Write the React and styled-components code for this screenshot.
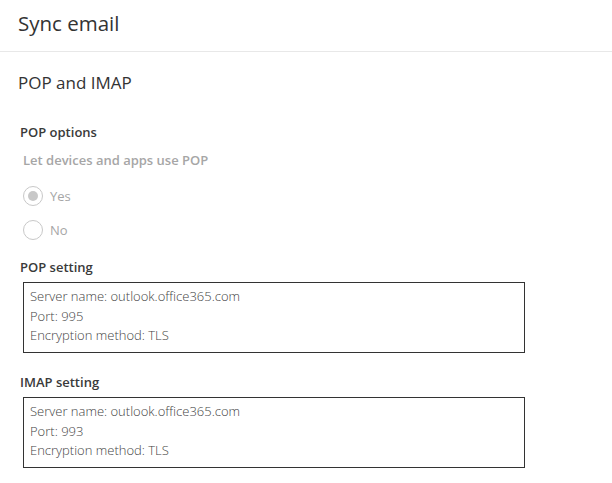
import React from "react";
import styled, { createGlobalStyle } from "styled-components";

const GlobalStyle = createGlobalStyle`
  html, body {
    margin: 0;
    padding: 0;
    background: #ffffff;
    font-family: "Open Sans", "Noto Sans", sans-serif;
    color: #333333;
  }
`;

const Page = styled.div`
  width: 612px;
  height: 483px;
  overflow: hidden;
  background: #fff;
`;

const Header = styled.div`
  height: 52px;
  box-sizing: border-box;
  padding: 10px 18px 0;
  border-bottom: 1px solid #e8e8e8;
`;

const Title = styled.h1`
  margin: 0;
  font-size: 20.5px;
  font-weight: 400;
  line-height: 27px;
  color: #333;
`;

const Body = styled.div`
  padding: 20px 18px 0;
`;

const SectionTitle = styled.h2`
  margin: 0 0 29px;
  font-size: 17px;
  font-weight: 400;
  line-height: 22px;
  color: #333;
`;

const Group = styled.div`
  padding-left: 2px;
`;

const Label = styled.div`
  font-size: 13px;
  font-weight: 600;
  line-height: 18px;
  color: #3a3a3a;
`;

const SubLabel = styled.div`
  font-size: 13px;
  font-weight: 600;
  line-height: 18px;
  color: #a6a6a6;
  padding-left: 3px;
  margin: 10px 0 17px;
`;

const RadioList = styled.div`
  display: flex;
  flex-direction: column;
  gap: 14px;
  padding-left: 3px;
  margin-bottom: 18px;
`;

const RadioRow = styled.label`
  display: flex;
  align-items: center;
  gap: 7px;
  font-size: 13px;
  color: #a6a6a6;
  height: 20px;
`;

const Circle = styled.span`
  width: 18px;
  height: 18px;
  border: 1px solid #c8c8c8;
  border-radius: 50%;
  display: flex;
  align-items: center;
  justify-content: center;
  box-sizing: content-box;
`;

const Dot = styled.span`
  width: 10px;
  height: 10px;
  border-radius: 50%;
  background: #c8c8c8;
`;

const Box = styled.div`
  width: 502px;
  height: 71px;
  box-sizing: border-box;
  margin: 6px 0 0 3px;
  border: 1px solid #333;
  padding: 4px 6px;
  font-size: 13px;
  font-weight: 300;
  line-height: 19.5px;
  color: #444;
  margin-bottom: ${(p) => p.gap || 0}px;
`;

const Radio = ({ checked, children }) => (
  <RadioRow>
    <Circle>{checked && <Dot />}</Circle>
    {children}
  </RadioRow>
);

const settings = [
  { name: "POP setting", port: 995 },
  { name: "IMAP setting", port: 993 },
];

export default function App() {
  return (
    <Page>
      <GlobalStyle />
      <Header>
        <Title>Sync email</Title>
      </Header>
      <Body>
        <SectionTitle>POP and IMAP</SectionTitle>
        <Group>
          <Label>POP options</Label>
          <SubLabel>Let devices and apps use POP</SubLabel>
          <RadioList>
            <Radio checked>Yes</Radio>
            <Radio>No</Radio>
          </RadioList>
          {settings.map((s, i) => (
            <div key={s.name}>
              <Label>{s.name}</Label>
              <Box gap={i === 0 ? 20 : 0}>
                Server name: outlook.office365.com
                <br />
                Port: {s.port}
                <br />
                Encryption method: TLS
              </Box>
            </div>
          ))}
        </Group>
      </Body>
    </Page>
  );
}
